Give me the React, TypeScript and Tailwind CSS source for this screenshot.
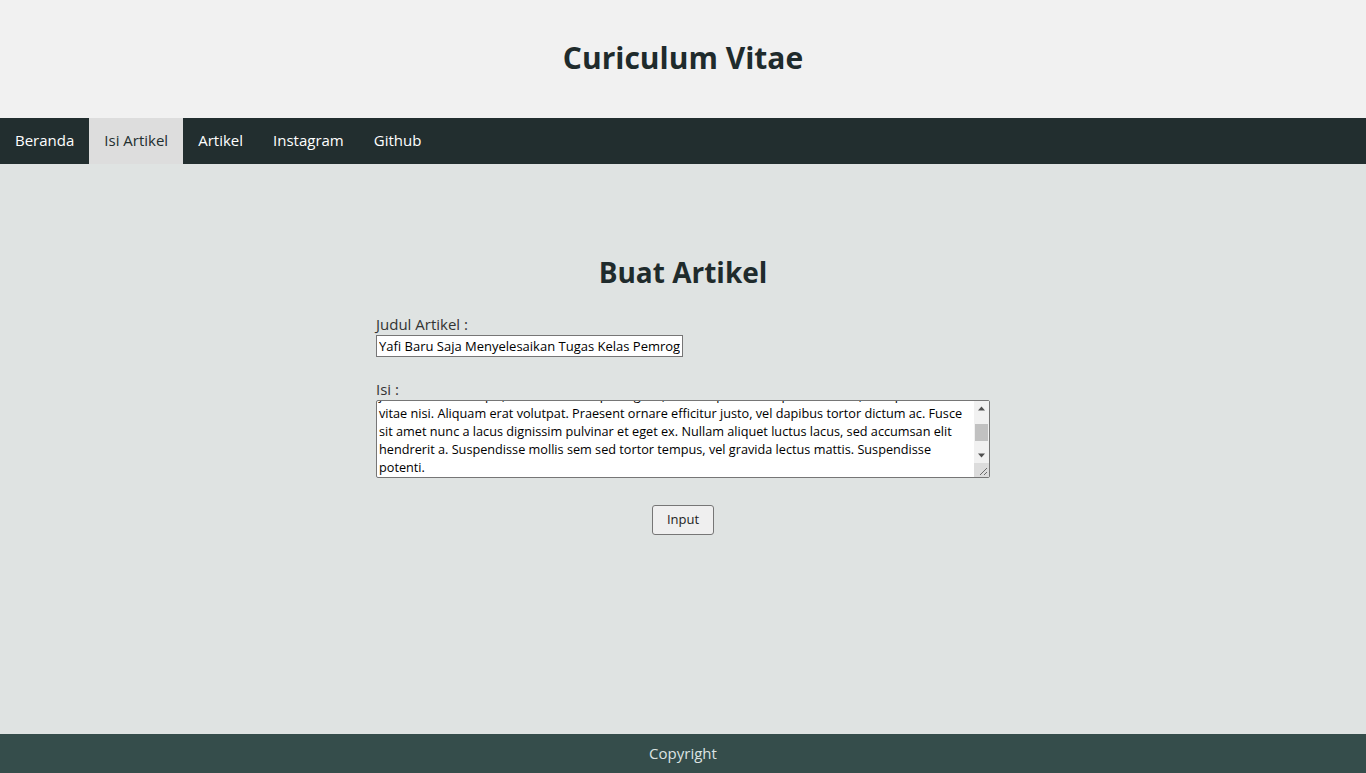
import { useEffect, useRef } from 'react';

const isi = [
    "Lorem ipsum dolor sit amet, consectetur adipiscing elit. Vivamus lacinia odio vitae vestibulum vestibulum.",
    "Cras venenatis euismod malesuada. Nullam ac erat ante. Sed posuere, nunc sed pharetra fermentum, neque",
    "justo tincidunt turpis, consectetur adipiscing elit, sed tempor lorem ipsum mauris, suscipit vel dolor at",
    "vitae nisi. Aliquam erat volutpat. Praesent ornare efficitur justo, vel dapibus tortor dictum ac. Fusce",
    "sit amet nunc a lacus dignissim pulvinar et eget ex. Nullam aliquet luctus lacus, sed accumsan elit",
    "hendrerit a. Suspendisse mollis sem sed tortor tempus, vel gravida lectus mattis. Suspendisse",
    "potenti.",
].join("\n");

const menu = ["Beranda", "Isi Artikel", "Artikel", "Instagram", "Github"];

const App = () => {
    const area = useRef<HTMLTextAreaElement>(null);

    // scroll isi ke bawah seperti di screenshot
    useEffect(() => {
        if (area.current) area.current.scrollTop = area.current.scrollHeight;
    }, []);

    return (
        <div className="flex flex-col h-screen font-['Open_Sans',sans-serif] text-[#1f2b2c]">
            <header className="h-[118px] shrink-0 bg-[#f1f1f1] flex items-center justify-center">
                <h1 className="text-[30px] font-bold pb-[4px]">Curiculum Vitae</h1>
            </header>
            <nav className="h-[46px] shrink-0 bg-[#222e2f] flex">
                {menu.map((m) => (
                    <a
                        key={m}
                        className={
                            m === "Isi Artikel"
                                ? "px-[15px] pb-[2px] flex items-center text-[15px] bg-[#dddddd] text-[#222e2f]"
                                : "px-[15px] pb-[2px] flex items-center text-[15px] text-white"
                        }
                    >
                        {m}
                    </a>
                ))}
            </nav>
            <main className="flex-1 bg-[#dfe3e2] pt-[88px]">
                <h2 className="text-center text-[28px] font-bold leading-[40px]">Buat Artikel</h2>
                <form className="w-[614px] mx-auto mt-[22px] flex flex-col text-[#333]">
                    <label className="text-[15px] leading-[20px]">Judul Artikel :</label>
                    <input
                        type="text"
                        defaultValue="Yafi Baru Saja Menyelesaikan Tugas Kelas Pemrograman Web"
                        className="w-[307px] h-[22px] mt-[1px] px-[2px] bg-white border border-[#767676] text-[13px] text-black"
                    />
                    <label className="text-[15px] leading-[20px] mt-[22px]">Isi :</label>
                    <div className="relative w-[614px] h-[78px] mt-[1px]">
                        <textarea
                            ref={area}
                            defaultValue={isi}
                            wrap="off"
                            className="w-full h-full pl-[2px] pr-[18px] py-[1px] bg-white border border-[#767676] rounded-[2px] text-[12.7px] leading-[18px] text-black overflow-hidden"
                        />
                        {/* scrollbar */}
                        <div className="absolute right-[1px] top-[1px] w-[15px] h-[62px] bg-[#f1f1f1] flex flex-col items-center">
                            <svg width="15" height="15" viewBox="0 0 15 15">
                                <path d="M4 9.5 L7.5 5.5 L11 9.5 Z" fill="#505050" />
                            </svg>
                            <div className="w-[13px] h-[17px] bg-[#c1c1c1] mt-[8px]" />
                            <div className="flex-1" />
                            <svg width="15" height="15" viewBox="0 0 15 15">
                                <path d="M4 5.5 L7.5 9.5 L11 5.5 Z" fill="#505050" />
                            </svg>
                        </div>
                        <div className="absolute right-[1px] bottom-[1px] w-[15px] h-[14px] bg-[#dcdcdc]" />
                        <svg className="absolute right-[2px] bottom-[2px]" width="9" height="9" viewBox="0 0 9 9">
                            <path d="M8 1 L1 8 M8 5 L5 8" stroke="#6b6b6b" strokeWidth="1" />
                        </svg>
                    </div>
                    <button
                        type="button"
                        className="self-center mt-[27px] w-[62px] h-[30px] rounded-[3px] border border-[#767676] bg-[#efefef] text-[13px] text-[#222]"
                    >
                        Input
                    </button>
                </form>
            </main>
            <footer className="h-[39px] shrink-0 bg-[#354d4b] flex items-center justify-center text-[15px] text-[#dce3e2]">
                Copyright
            </footer>
        </div>
    );
};

export default App;
